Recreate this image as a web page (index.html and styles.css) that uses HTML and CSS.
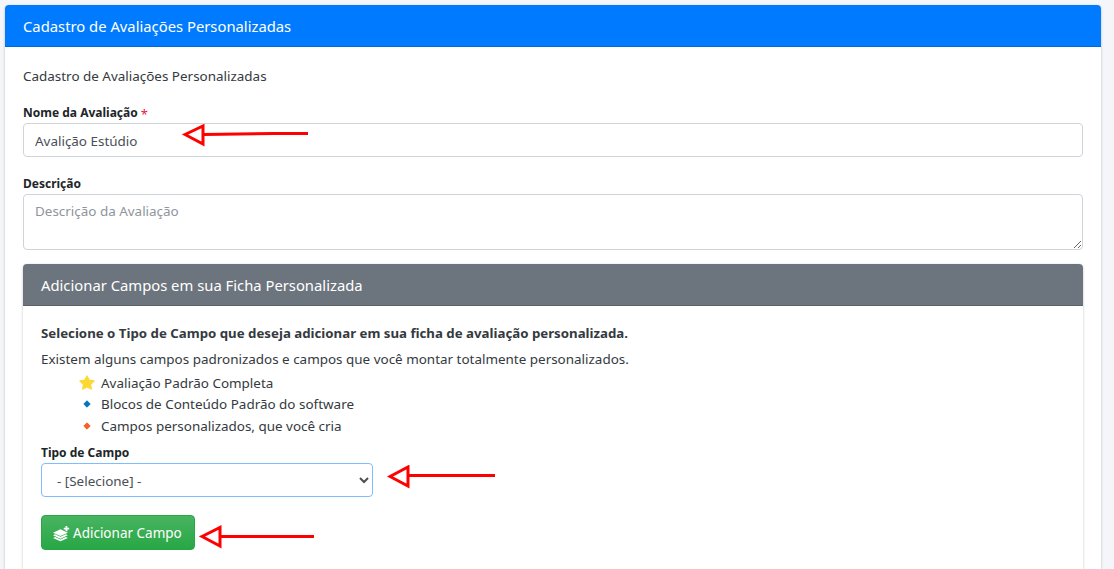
FILE: index.html
```html
<!DOCTYPE html>
<html lang="pt-BR">
<head>
    <meta charset="UTF-8">
    <meta name="viewport" content="width=device-width, initial-scale=1.0">
    <title>Cadastro de Avaliações Personalizadas</title>
    <link rel="stylesheet" href="styles.css">
</head>
<body>
    <div class="card page-card">
        <div class="card-header primary">Cadastro de Avaliações Personalizadas</div>
        <form class="card-body page-body">
            <p class="intro">Cadastro de Avaliações Personalizadas</p>

            <div class="field name-field">
                <label for="nome">Nome da Avaliação <span class="req">*</span></label>
                <input type="text" id="nome" value="Avalição Estúdio">
            </div>

            <div class="field desc-field">
                <label for="descricao">Descrição</label>
                <textarea id="descricao" placeholder="Descrição da Avaliação"></textarea>
            </div>

            <div class="card inner">
                <div class="card-header secondary">Adicionar Campos em sua Ficha Personalizada</div>
                <div class="card-body inner-body">
                    <p class="lead-text">Selecione o Tipo de Campo que deseja adicionar em sua ficha de avaliação personalizada.</p>
                    <p class="sub-text">Existem alguns campos padronizados e campos que você montar totalmente personalizados.</p>
                    <ul class="legend">
                        <li>
                            <svg class="mark" width="16" height="16" viewBox="0 0 16 16"><path d="M8 1l2.200 4.300 4.800.7-3.500 3.300.8 4.700L8 11.800l-4.300 2.200.8-4.700L1 6l4.800-.7z" fill="#fdd835" stroke="#fdd835" stroke-width="1.400" stroke-linejoin="round"/></svg>
                            Avaliação Padrão Completa
                        </li>
                        <li>
                            <svg class="mark" width="16" height="16" viewBox="0 0 16 16"><path d="M8 4.800L11.200 8 8 11.200 4.800 8z" fill="#0277bd" stroke="#0277bd" stroke-linejoin="round"/></svg>
                            Blocos de Conteúdo Padrão do software
                        </li>
                        <li>
                            <svg class="mark" width="16" height="16" viewBox="0 0 16 16"><path d="M8 4.800L11.200 8 8 11.200 4.800 8z" fill="#f4622a" stroke="#f4622a" stroke-linejoin="round"/></svg>
                            Campos personalizados, que você cria
                        </li>
                    </ul>
                    <div class="field type-field">
                        <label for="tipo">Tipo de Campo</label>
                        <select id="tipo">
                            <option>- [Selecione] -</option>
                        </select>
                    </div>
                    <button type="button" class="btn-add">
                        <svg width="17" height="17" viewBox="0 0 16 16" fill="#fff">
                            <path d="M7 4l7 3.200-7 3.200-7-3.200z"/>
                            <path d="M2 8.800l5 2.300 5-2.300 2 .9-7 3.200-7-3.200z"/>
                            <path d="M2 11.300l5 2.300 5-2.300 2 .9-7 3.200-7-3.200z"/>
                            <path d="M11.800 1h1.700v1.600h1.700v1.700h-1.700v1.600h-1.700V4.300h-1.700V2.600h1.700z"/>
                        </svg>
                        Adicionar Campo
                    </button>
                </div>
            </div>
        </form>
    </div>

    <!-- setas vermelhas desenhadas sobre o print -->
    <svg class="arrow arrow-name" width="130" height="26" viewBox="0 0 130 26">
        <path d="M126 9.500H92L22 10.500M3 10.500L21 2V20z" fill="none" stroke="#f00" stroke-width="3"/>
    </svg>
    <svg class="arrow arrow-type" width="112" height="26" viewBox="0 0 112 26">
        <path d="M108 10.500H22M3 11.500L21 2V21z" fill="none" stroke="#f00" stroke-width="3"/>
    </svg>
    <svg class="arrow arrow-btn" width="120" height="26" viewBox="0 0 120 26">
        <path d="M115 11.500H22M3 11.500L21 2.500V21z" fill="none" stroke="#f00" stroke-width="3"/>
    </svg>
</body>
</html>
```

FILE: styles.css
```css
* {
    box-sizing: border-box;
}

html, body {
    height: 569px;
    overflow: hidden;
}

body {
    margin: 0;
    padding: 5px 13px 0 5px;
    position: relative;
    background-color: #f4f6f9;
    color: #343a40;
    font-family: "Noto Sans", "Open Sans", sans-serif;
    font-size: 13.450px;
    line-height: 20px;
}

.card {
    background: #fff;
    border-radius: 4px;
    box-shadow: 0 0 1px rgba(0, 0, 0, .13), 0 1px 3px rgba(0, 0, 0, .2);
}

.page-card {
    display: flex;
    flex-direction: column;
    height: 100%;
    border-radius: 4px 4px 0 0;
}

.card-header {
    height: 42px;
    flex: none;
    padding: 0 18px;
    border-radius: 4px 4px 0 0;
    color: #fff;
    font-size: 14.800px;
    line-height: 43px;
}

.primary {
    background: #007bff;
    border-bottom: 1px solid #0069d9;
}

.secondary {
    background: #6c757d;
    border-bottom: 1px solid #5a6268;
}

.page-body {
    display: flex;
    flex-direction: column;
    flex: 1;
    padding: 18px 18px 0;
}

.inner-body {
    padding: 17px 18px 0;
}

.intro {
    margin: 0 0 16px;
    height: 22px;
    line-height: 22px;
}

.field label {
    display: block;
    height: 20px;
    color: #212529;
    font-weight: 700;
    font-size: 12px;
    line-height: 19px;
}

.req {
    color: #e8174a;
    font-weight: 400;
    font-size: 13px;
    vertical-align: -2px;
}

input, textarea, select {
    display: block;
    width: 100%;
    padding: 6px 11px;
    border: 1px solid #ced4da;
    border-radius: 4px;
    background: #fff;
    color: #495057;
    font: inherit;
}

input {
    height: 34px;
    padding-top: 8px;
}

.desc-field {
    margin-top: 17px;
}

textarea {
    height: 56px;
    padding-top: 5px;
    line-height: 22px;
}

textarea::placeholder {
    color: #8e959c;
}

.inner {
    flex: 1;
    margin-top: 14px;
    border-radius: 4px 4px 0 0;
}

.lead-text {
    margin: 0;
    color: #343a40;
    font-weight: 700;
    font-size: 13.250px;
}

.sub-text {
    margin: 6px 0 0;
}

.legend {
    list-style: none;
    margin: 3px 0 0;
    padding: 0 0 0 38px;
}

.legend li {
    display: flex;
    align-items: center;
    gap: 6px;
    height: 21.500px;
}

.type-field {
    margin-top: 6px;
}

select {
    width: 332px;
    height: 34px;
    padding: 7px 11px;
    border-color: #80bdff;
}

.btn-add {
    display: flex;
    align-items: center;
    gap: 3px;
    width: 154px;
    height: 35px;
    margin-top: 18px;
    padding: 2px 11px 0;
    border: 1px solid #28a745;
    border-radius: 4px;
    background: linear-gradient(#48b461, #28a745);
    color: #fff;
    font: inherit;
    font-size: 13.500px;
}

.arrow {
    position: absolute;
}

.arrow-name {
    left: 182px;
    top: 124px;
}

.arrow-type {
    left: 387px;
    top: 465px;
}

.arrow-btn {
    left: 199px;
    top: 525px;
}
```
